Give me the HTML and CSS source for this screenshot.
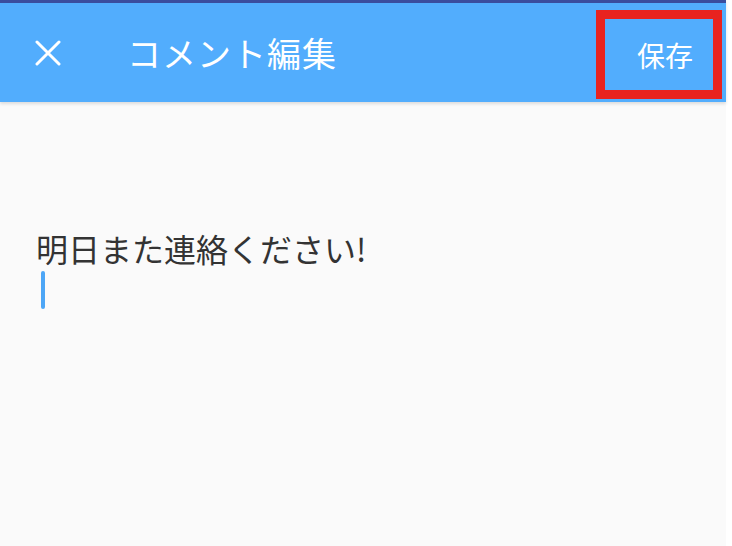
FILE: index.html
```html
<!DOCTYPE html>
<html lang="ja">
<head>
  <meta charset="UTF-8">
  <title>コメント編集</title>
  <link rel="stylesheet" href="styles.css">
</head>
<body>
  <div class="screen">
    <header class="app-bar">
      <button class="close-btn" type="button" aria-label="閉じる">
        <svg width="26" height="26" viewBox="0 0 26 26">
          <path d="M2 2 L24 24 M24 2 L2 24" stroke="#fff" stroke-width="3" stroke-linecap="round" fill="none"/>
        </svg>
      </button>
      <h1 class="title">コメント編集</h1>
      <button class="save-btn" type="button">保存</button>
    </header>

    <div class="editor">
      <div class="line">明日また連絡ください!</div>
      <div class="line"><span class="caret"></span></div>
    </div>
  </div>
</body>
</html>
```

FILE: styles.css
```css
html, body {
  margin: 0;
  padding: 0;
  background: #fff;
}

body {
  font-family: "Noto Sans CJK JP", "Noto Sans", Roboto, sans-serif;
}

.screen {
  width: 726px;
  height: 546px;
  background: #fafafa;
}

.app-bar {
  position: relative;
  height: 99px;
  border-top: 3px solid #3a4d9e;
  background: #52adfd;
  display: flex;
  align-items: center;
  box-shadow: 0 2px 3px rgba(0,0,0,0.12);
}

.close-btn {
  background: none;
  border: none;
  padding: 0;
  margin-left: 35px;
  width: 26px;
  height: 26px;
  display: flex;
  cursor: pointer;
}

.title {
  margin: 0 0 0 66px;
  font-size: 34px;
  font-weight: 400;
  color: #fff;
  letter-spacing: 1px;
  flex: 1;
}

.save-btn {
  width: 126px;
  height: 89px;
  margin: 4px 4px 0 0;
  box-sizing: border-box;
  border: 9px solid #e8231f;
  background: none;
  color: #fff;
  font-family: inherit;
  font-size: 28px;
  padding: 0 0 0 12px;
  cursor: pointer;
}

.editor {
  padding: 127px 0 0 36px;
  color: #333;
  font-size: 32px;
}

.line {
  height: 38px;
  line-height: 38px;
}

.caret {
  display: inline-block;
  width: 4px;
  height: 38px;
  margin: 4px 0 0 5px;
  background: #4da6f6;
  border-radius: 2px;
  vertical-align: top;
}
```
